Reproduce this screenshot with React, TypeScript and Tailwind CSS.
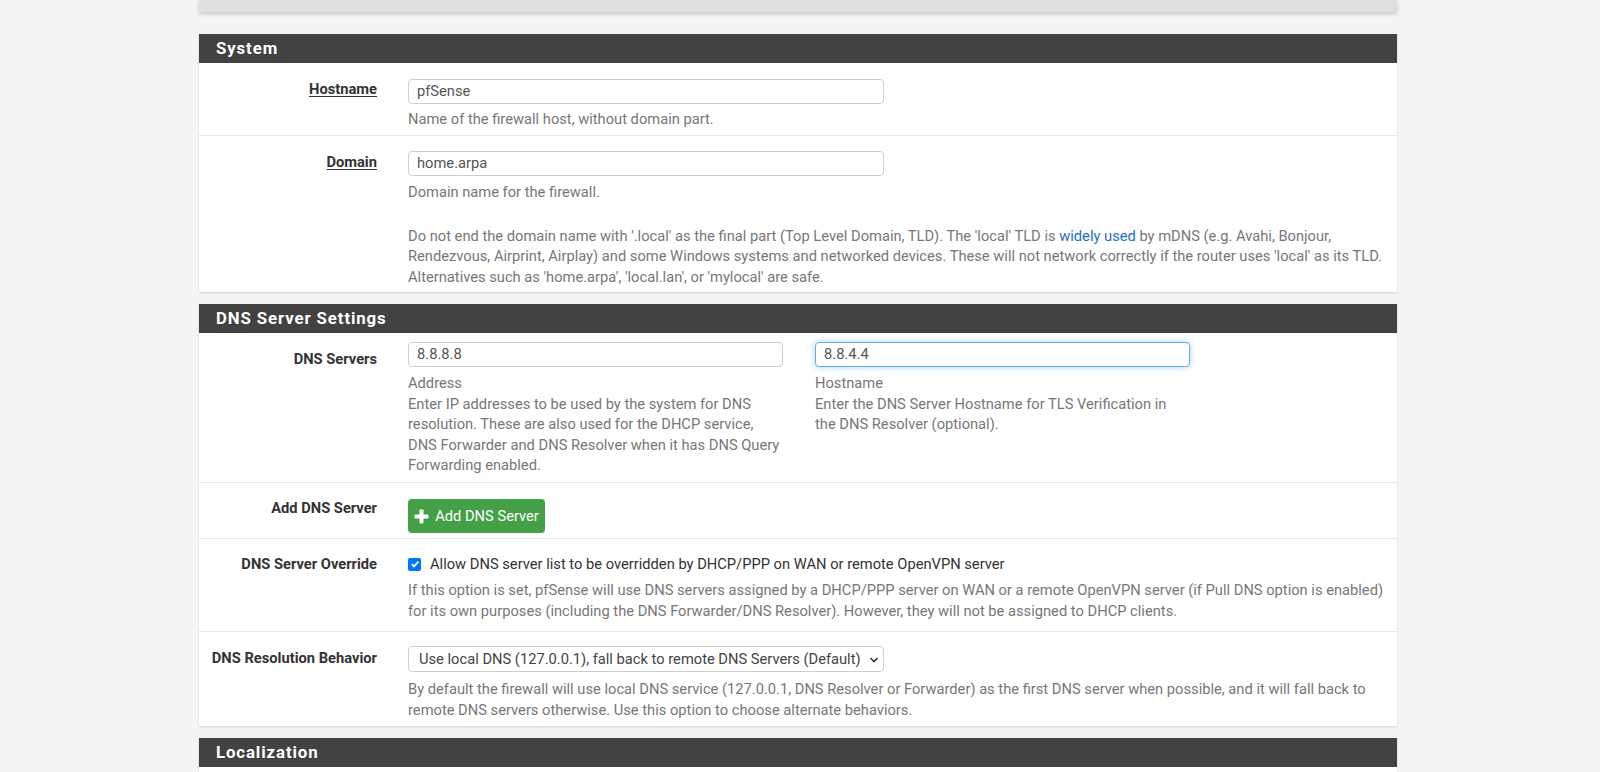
import React from 'react'

// pfSense – System / General Setup (partial)

function PanelHeading({ title }: { title: string }) {
  return (
    <div className="h-[29px] bg-[#424242] pl-[17px] flex items-center">
      <h2 className="text-[16.8px] font-bold text-white tracking-[0.9px] leading-none">{title}</h2>
    </div>
  )
}

function Label({ children, pt, underline }: { children: React.ReactNode; pt: string; underline?: boolean }) {
  return (
    <div className={`w-[209px] shrink-0 pr-[31px] text-right font-bold text-[#333] leading-5 ${pt}`}>
      <span className={underline ? 'underline underline-offset-2 decoration-1' : ''}>{children}</span>
    </div>
  )
}

function TextInput({ value, width, focused }: { value: string; width: string; focused?: boolean }) {
  return (
    <div
      className={`h-[25px] ${width} rounded-[4px] border bg-white px-[8px] flex items-center text-[#555] ${
        focused ? 'border-[#66afe9] shadow-[0_0_6px_rgba(102,175,233,0.6)]' : 'border-[#cfcfcf]'
      }`}
    >
      {value}
    </div>
  )
}

function Help({ children, className = '' }: { children: React.ReactNode; className?: string }) {
  return <div className={`text-[#777] leading-[20.5px] whitespace-nowrap ${className}`}>{children}</div>
}

export default function App() {
  return (
    <div className="h-[772px] overflow-hidden bg-[#f4f4f4] font-['Roboto','Liberation_Sans',sans-serif] text-[14.7px]">
      <div className="ml-[199px] w-[1198px]">
        {/* barra superior (breadcrumb cortado) */}
        <div className="h-[12px] bg-[#e0e0e0] shadow-[0_2px_4px_rgba(0,0,0,0.18)]" />

        {/* ── System ───────────────────────────── */}
        <section className="mt-[22px] bg-white shadow-[0_1px_2px_rgba(0,0,0,0.15)]">
          <PanelHeading title="System" />
          <div className="divide-y divide-[#e6e6e6]">
            <div className="flex h-[73px]">
              <Label pt="pt-[16px]" underline>Hostname</Label>
              <div className="flex-1 pt-[16px]">
                <TextInput value="pfSense" width="w-[476px]" />
                <Help className="mt-[5px]">Name of the firewall host, without domain part.</Help>
              </div>
            </div>
            <div className="flex h-[156px]">
              <Label pt="pt-[16px]" underline>Domain</Label>
              <div className="flex-1 pt-[15px]">
                <TextInput value="home.arpa" width="w-[476px]" />
                <Help className="mt-[6px]">Domain name for the firewall.</Help>
                <Help className="mt-[23px]">
                  Do not end the domain name with '.local' as the final part (Top Level Domain, TLD). The 'local' TLD is{' '}
                  <span className="text-[#1e6fc2]">widely used</span> by mDNS (e.g. Avahi, Bonjour,
                  <br />
                  Rendezvous, Airprint, Airplay) and some Windows systems and networked devices. These will not network correctly if the router uses 'local' as its TLD.
                  <br />
                  Alternatives such as 'home.arpa', 'local.lan', or 'mylocal' are safe.
                </Help>
              </div>
            </div>
          </div>
        </section>

        {/* ── DNS Server Settings ──────────────── */}
        <section className="mt-[12px] bg-white shadow-[0_1px_2px_rgba(0,0,0,0.15)]">
          <PanelHeading title="DNS Server Settings" />
          <div className="divide-y divide-[#e6e6e6]">
            <div className="flex h-[150px]">
              <Label pt="pt-[16px]">DNS Servers</Label>
              <div className="flex-1 pt-[9px] flex gap-[32px]">
                <div className="w-[375px]">
                  <TextInput value="8.8.8.8" width="w-[375px]" />
                  <Help className="mt-[6px]">
                    Address
                    <br />
                    Enter IP addresses to be used by the system for DNS
                    <br />
                    resolution. These are also used for the DHCP service,
                    <br />
                    DNS Forwarder and DNS Resolver when it has DNS Query
                    <br />
                    Forwarding enabled.
                  </Help>
                </div>
                <div className="w-[375px]">
                  <TextInput value="8.8.4.4" width="w-[375px]" focused />
                  <Help className="mt-[6px]">
                    Hostname
                    <br />
                    Enter the DNS Server Hostname for TLS Verification in
                    <br />
                    the DNS Resolver (optional).
                  </Help>
                </div>
              </div>
            </div>

            <div className="flex h-[56px]">
              <Label pt="pt-[15px]">Add DNS Server</Label>
              <div className="flex-1 pt-[16px]">
                <button className="h-[34px] w-[137px] rounded-[4px] bg-[#43a047] text-white flex items-center justify-center gap-[6px]">
                  <svg width="15" height="15" viewBox="0 0 15 15" aria-hidden>
                    <rect x="5.5" y="0.5" width="4" height="14" rx="0.8" fill="#fff" />
                    <rect x="0.5" y="5.5" width="14" height="4" rx="0.8" fill="#fff" />
                  </svg>
                  <span>Add DNS Server</span>
                </button>
              </div>
            </div>

            <div className="flex h-[93px]">
              <Label pt="pt-[15px]">DNS Server Override</Label>
              <div className="flex-1 pt-[15px]">
                <div className="flex items-center h-5 text-[#333]">
                  <span className="w-[13px] h-[13px] rounded-[2px] bg-[#0075ff] flex items-center justify-center">
                    <svg width="10" height="10" viewBox="0 0 10 10" aria-hidden>
                      <path d="M1.8 5.2 L4 7.4 L8.4 2.6" stroke="#fff" strokeWidth="1.8" fill="none" />
                    </svg>
                  </span>
                  <span className="ml-[9px]">Allow DNS server list to be overridden by DHCP/PPP on WAN or remote OpenVPN server</span>
                </div>
                <Help className="mt-[6px]">
                  If this option is set, pfSense will use DNS servers assigned by a DHCP/PPP server on WAN or a remote OpenVPN server (if Pull DNS option is enabled)
                  <br />
                  for its own purposes (including the DNS Forwarder/DNS Resolver). However, they will not be assigned to DHCP clients.
                </Help>
              </div>
            </div>

            <div className="flex h-[94px]">
              <Label pt="pt-[16px]">DNS Resolution Behavior</Label>
              <div className="flex-1 pt-[14px]">
                <div className="h-[26px] w-[476px] rounded-[4px] border border-[#cfcfcf] bg-white pl-[10px] pr-[4px] flex items-center justify-between text-[#444]">
                  <span>Use local DNS (127.0.0.1), fall back to remote DNS Servers (Default)</span>
                  <svg width="10" height="8" viewBox="0 0 10 8" aria-hidden className="mt-[2px]">
                    <path d="M1.5 2 L5 5.5 L8.5 2" stroke="#333" strokeWidth="1.6" fill="none" />
                  </svg>
                </div>
                <Help className="mt-[7px]">
                  By default the firewall will use local DNS service (127.0.0.1, DNS Resolver or Forwarder) as the first DNS server when possible, and it will fall back to
                  <br />
                  remote DNS servers otherwise. Use this option to choose alternate behaviors.
                </Help>
              </div>
            </div>
          </div>
        </section>

        {/* ── Localization ─────────────────────── */}
        <section className="mt-[12px] bg-white shadow-[0_1px_2px_rgba(0,0,0,0.15)]">
          <PanelHeading title="Localization" />
          <div className="h-[60px]" />
        </section>
      </div>
    </div>
  )
}
